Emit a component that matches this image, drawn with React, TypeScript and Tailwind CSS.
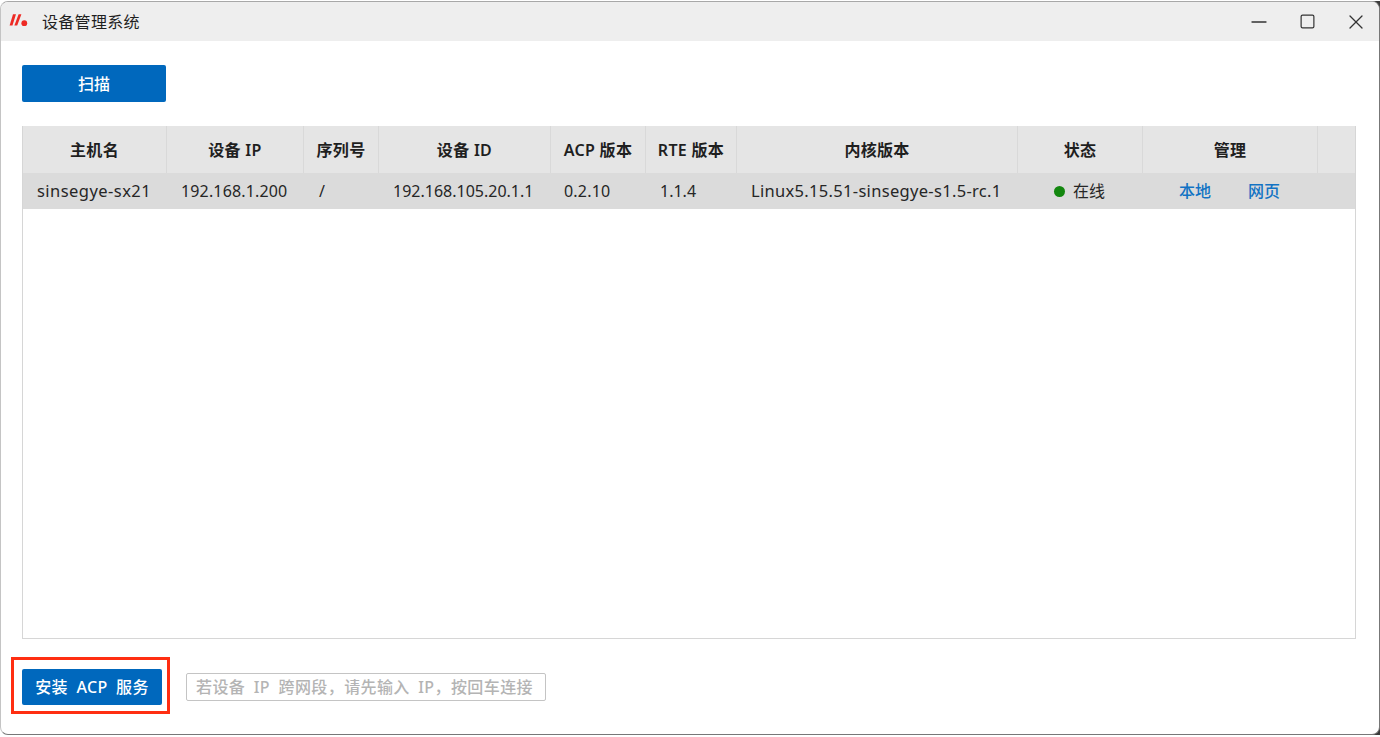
import { Minus, Square, X } from "lucide-react";

const font = { fontFamily: '"Noto Sans", "Noto Sans CJK SC", sans-serif' };

const gridCols =
  "grid grid-cols-[144px_137px_75px_172px_95px_91px_281px_125px_175px_1fr]";

const headers = [
  "主机名",
  "设备 IP",
  "序列号",
  "设备 ID",
  "ACP 版本",
  "RTE 版本",
  "内核版本",
  "状态",
  "管理",
  "",
];

function Logo() {
  return (
    <svg width="19" height="14" viewBox="0 0 19 14" className="shrink-0 -mt-[2px]">
      <path d="M4 0.3 L7 0.3 L3.5 11.5 L0.6 11.5 Z" fill="#ee2a24" />
      <path d="M9.6 0.3 L12.4 0.3 L8.2 11.5 L5.4 11.5 Z" fill="#ee2a24" />
      <circle cx="15.3" cy="9.2" r="2.9" fill="#ee2a24" />
    </svg>
  );
}

export default function App() {
  return (
    <div className="w-[1380px] h-[737px] bg-white pt-px pb-0.5 overflow-hidden" style={font}>
      {/* dark corners at right only, like the captured window */}
      <div className="h-full bg-[linear-gradient(to_right,#ffffff_50%,#3a3a3a_50%)]">
        <div className="h-full flex flex-col bg-white border border-[#777777] border-l-[#c4c4c4] border-t-[#a8a8a8] rounded-[8px] overflow-hidden">
          {/* title bar */}
          <header className="h-[39px] shrink-0 bg-[#eeeeee] flex items-center pl-[8px] text-[#1f1f1f]">
            <Logo />
            <span className="ml-[14px] text-[16px] tracking-[0.3px]">设备管理系统</span>
            <div className="ml-auto flex items-center gap-[24px] pr-[11px] text-[#333333]">
              <Minus size={24} strokeWidth={1.3} />
              <Square size={17} strokeWidth={1.7} className="mx-[4px]" />
              <X size={24} strokeWidth={1.3} />
            </div>
          </header>

          <main className="flex-1 flex flex-col pl-[21px] pr-[23px]">
            <button className="mt-[24px] w-[144px] h-[37px] bg-[#0068bd] rounded-[2px] text-white text-[16px] font-medium">
              扫描
            </button>

            {/* device table */}
            <section className="mt-[24px] h-[513px] border border-[#d6d6d6] border-t-0">
              <div className={`${gridCols} h-[47px] bg-[#e5e5e5] text-[16px] tracking-[0.3px] font-semibold text-[#1f1f1f]`}>
                {headers.map((h, i) => (
                  <div
                    key={i}
                    className="flex items-center justify-center border-r border-[#d9d9d9] last:border-r-0"
                  >
                    {h}
                  </div>
                ))}
              </div>
              <div className={`${gridCols} h-[36px] bg-[#dbdbdb] text-[16px] text-[#262626] items-center`}>
                <span className="pl-[14px] whitespace-nowrap text-[16.5px] tracking-[0.45px]">sinsegye-sx21</span>
                <span className="pl-[14px] whitespace-nowrap tracking-[0.15px]">192.168.1.200</span>
                <span className="pl-[15px]">/</span>
                <span className="pl-[14px] whitespace-nowrap">192.168.105.20.1.1</span>
                <span className="pl-[13px] tracking-[0.2px]">0.2.10</span>
                <span className="pl-[14px]">1.1.4</span>
                <span className="pl-[14px] whitespace-nowrap text-[16.5px] tracking-[0.31px]">Linux5.15.51-sinsegye-s1.5-rc.1</span>
                <span className="pl-[36px] flex items-center gap-[8px]">
                  <span className="w-[11px] h-[11px] rounded-full bg-[#13870f]" />
                  在线
                </span>
                <span className="pl-[36px] flex gap-[37px] text-[#1273c4] font-medium">
                  <a>本地</a>
                  <a>网页</a>
                </span>
                <span />
              </div>
            </section>

            {/* install + manual ip */}
            <div className="mt-[30px] flex items-center">
              <div className="relative w-[140px] h-[36px]">
                <button className="w-full h-full bg-[#0068bd] rounded-[2px] text-white text-[16px] font-medium tracking-[0.35px] [word-spacing:4px] whitespace-nowrap">
                  安装 ACP 服务
                </button>
                <div className="absolute -left-[11px] -top-[12px] w-[159px] h-[57px] border-[3px] border-[#ff2e12]" />
              </div>
              <input
                className="ml-[24px] w-[360px] h-[28px] border border-[#c4c4c4] rounded-[2px] px-[9px] text-[16px] font-medium tracking-[0.4px] [word-spacing:4px] placeholder:text-[#b4b4b4] outline-none"
                placeholder="若设备 IP 跨网段，请先输入 IP，按回车连接"
              />
            </div>
          </main>
        </div>
      </div>
    </div>
  );
}
